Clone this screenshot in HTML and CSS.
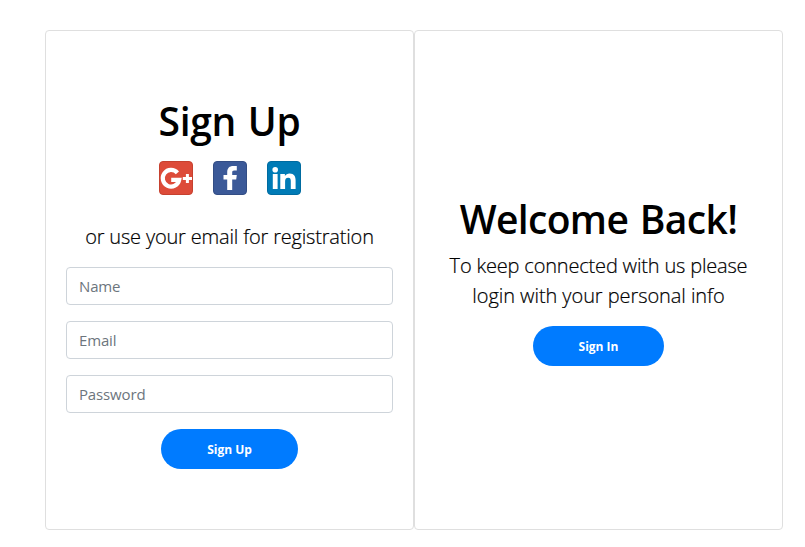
FILE: index.html
```html
<!DOCTYPE html>
<html lang="en">
<head>
<meta charset="utf-8">
<title>Sign Up</title>
<link rel="stylesheet" href="styles.css">
</head>
<body>
<main class="card-group">
  <section class="card card-up">
    <h1 class="title title-up">Sign Up</h1>
    <div class="social">
      <svg viewBox="0 0 34 34" aria-label="Google Plus"><rect x=".5" y=".5" width="33" height="33" rx="3.5" fill="#dd4b39" stroke="#c6412f"/><path d="M18.4 11.9A8.3 8.3 0 1 0 20.2 18.9H12.2" fill="none" stroke="#fff" stroke-width="4.2"/><path d="M23.8 17.5H33M28.4 13V22" fill="none" stroke="#fff" stroke-width="3"/></svg>
      <svg viewBox="0 0 34 34" aria-label="Facebook"><rect x=".5" y=".5" width="33" height="33" rx="3.5" fill="#3b5998" stroke="#334d84"/><path d="M14.2 29V18.5H10.5V14H14.2V11.3C14.2 7 16.6 5 20.2 5H23.8V9.5H21.2C19.6 9.5 19.2 10.3 19.2 11.6V14H23.8L23.2 18.5H19.2V29Z" fill="#fff"/></svg>
      <svg viewBox="0 0 34 34" aria-label="LinkedIn"><rect x=".5" y=".5" width="33" height="33" rx="3.5" fill="#007bb6" stroke="#006ba0"/><circle cx="8.2" cy="8.8" r="2.8" fill="#fff"/><path d="M5.8 13H10.6V28H5.8ZM13.3 13H17.9V15.1C18.8 13.5 20.5 12.6 22.6 12.6C27.2 12.6 28.6 15.5 28.6 19.6V28H23.8V20.5C23.8 18.4 23.5 16.7 21.2 16.7C18.8 16.7 18.1 18.3 18.1 20.5V28H13.3Z" fill="#fff"/></svg>
    </div>
    <p class="lead lead-up">or use your email for registration</p>
    <form class="form">
      <input class="field name" type="text" placeholder="Name">
      <input class="field" type="email" placeholder="Email">
      <input class="field password" type="password" placeholder="Password">
      <button class="btn btn-up" type="button">Sign Up</button>
    </form>
  </section>
  <section class="card">
    <h1 class="title title-back">Welcome Back!</h1>
    <p class="lead lead-back"><span class="line-one">To keep connected with us please</span><br><span class="line-two">login with your personal info</span></p>
    <button class="btn btn-in" type="button">Sign In</button>
  </section>
</main>
</body>
</html>
```
FILE: styles.css
```css
* { box-sizing: border-box; }
body { margin: 0; background: #fff; color: #000; font-family: "Open Sans", sans-serif; }
.card-group { display: flex; width: 738px; height: 500px; margin: 30px 0 0 45px; }
.card {
  width: 369px; padding: 0 20px; border: 1px solid #dfdfdf; border-radius: 4px;
  display: flex; flex-direction: column; align-items: center; justify-content: center;
}
.card-up { padding-top: 6px; }
.title { margin: 0 0 8px; font-size: 39px; font-weight: 600; line-height: 48px; white-space: nowrap; }
.title-up { letter-spacing: -0.3px; word-spacing: 2px; }
.title-back { padding-top: 2px; margin-top: -2px; letter-spacing: -0.65px; word-spacing: 2px; }
.social { display: flex; gap: 20px; height: 34px; margin: 8px 0 27px; }
.social svg { display: block; width: 34px; height: 34px; }
.lead { margin: 0 0 15px; font-size: 20px; font-weight: 300; line-height: 30px; text-align: center; white-space: nowrap; -webkit-text-stroke: 0.2px #000; }
.lead-up, .line-one { letter-spacing: -0.18px; }
.line-two { letter-spacing: -0.07px; }
.form { display: flex; flex-direction: column; align-items: center; gap: 16px; width: 100%; }
.field {
  width: 100%; height: 38px; padding: 6px 12px; border: 1px solid #ced4da; border-radius: 4px;
  background: #fff; font: 400 15px/24px "Open Sans", sans-serif; letter-spacing: -0.15px; outline: 0;
}
.field::placeholder { color: #6c757d; opacity: 1; }
.btn {
  height: 40px; padding: 2px 0 0; border: 0; border-radius: 20px; background: #007bff; color: #fff;
  font: 700 12px/18px "Open Sans", sans-serif;
}
.btn-up { width: 137px; }
.btn-in { width: 131px; }
```
